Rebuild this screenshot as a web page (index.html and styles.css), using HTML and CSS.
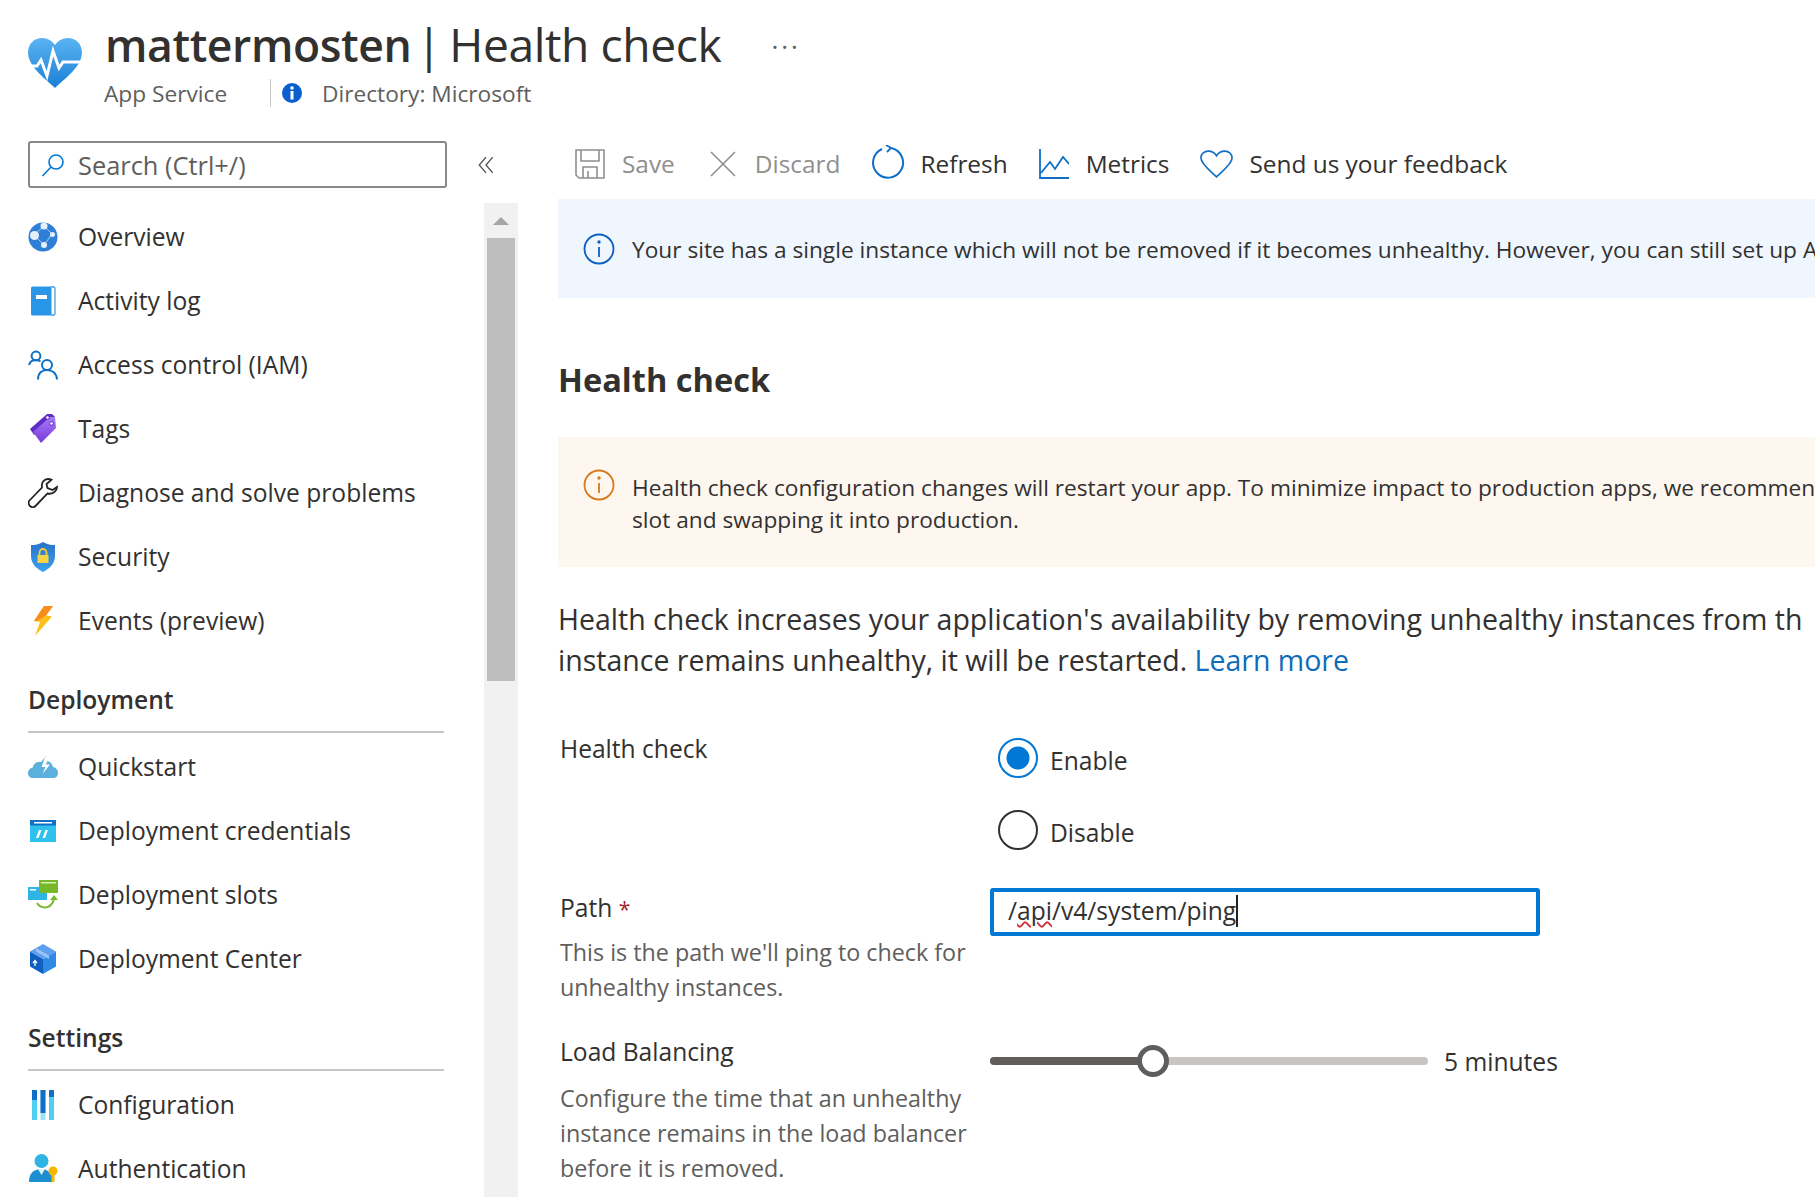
FILE: index.html
```html
<!DOCTYPE html>
<html lang="en">
<head>
    <meta charset="UTF-8">
    <title>mattermosten | Health check</title>
    <link rel="stylesheet" href="styles.css">
</head>
<body>
    <header class="page-head">
        <svg class="head-icon" viewBox="0 0 54 50">
            <defs>
                <linearGradient id="heartFill" x1="0" y1="0" x2="0" y2="1">
                    <stop offset="0" stop-color="#5ab4f2"/>
                    <stop offset="1" stop-color="#1a7fd6"/>
                </linearGradient>
            </defs>
            <path d="M27 50 C18 41 1 30 0 15 C0 5 7 0 14 0 C20 0 24 3 27 7 C30 3 34 0 40 0 C47 0 54 5 54 15 C53 30 36 41 27 50Z" fill="url(#heartFill)"/>
            <path d="M0 28 H9 L13 22 L19 38 L25 13 L31 30 L35 24 H54" fill="none" stroke="#fff" stroke-width="3"/>
        </svg>
        <div class="head-text">
            <h1 class="page-title"><b>mattermosten</b><span class="title-sep">|</span>Health check<span class="head-more">···</span></h1>
            <div class="page-sub">
                <span class="sub-type">App Service</span>
                <span class="sub-line"></span>
                <svg class="sub-info" viewBox="0 0 22 22">
                    <circle cx="11" cy="11" r="10" fill="#0b5ed0"/>
                    <rect x="9.5" y="9" width="3" height="8.5" fill="#fff"/>
                    <circle cx="11" cy="6" r="1.8" fill="#fff"/>
                </svg>
                <span>Directory: Microsoft</span>
            </div>
        </div>
    </header>

    <div class="page-body">
        <aside class="sidebar">
            <div class="search-row">
                <div class="search-box">
                    <svg class="search-icon" viewBox="0 0 24 24">
                        <circle cx="15" cy="9" r="7" fill="none" stroke="#0078d4" stroke-width="1.6"/>
                        <path d="M10 14 L1.5 23" stroke="#0078d4" stroke-width="1.6"/>
                    </svg>
                    <span>Search (Ctrl+/)</span>
                </div>
                <svg class="collapse-icon" viewBox="0 0 14 16">
                    <path d="M7 1 L1 8 L7 15 M13 1 L7 8 L13 15" fill="none" stroke="#555" stroke-width="1.2"/>
                </svg>
            </div>

            <div class="side-scroll">
                <nav class="nav">
                    <a class="nav-item">
                        <svg class="nav-icon" viewBox="0 0 30 30">
                            <circle cx="15" cy="15" r="14.5" fill="#2f7fd6"/>
                            <path d="M6 13 L16 4 L24 12 L16 23 Z" fill="none" stroke="#a8d0f5" stroke-width="1"/>
                            <circle cx="6.5" cy="13.5" r="4.5" fill="#e6f0fa"/>
                            <circle cx="16" cy="4" r="3.5" fill="#e6f0fa"/>
                            <circle cx="24.5" cy="12.5" r="2.5" fill="#e6f0fa"/>
                            <circle cx="16" cy="23" r="3" fill="#e6f0fa"/>
                        </svg>
                        <span>Overview</span>
                    </a>
                    <a class="nav-item">
                        <svg class="nav-icon" viewBox="0 0 30 30">
                            <rect x="3" y="0.5" width="24" height="29" rx="1.5" fill="#2a96e8"/>
                            <path d="M23.5 1 H26 A1 1 0 0 1 27 2 V28 A1 1 0 0 1 26 29 H23.5" fill="#fff" stroke="#1a7fd0" stroke-width="1"/>
                            <rect x="8" y="9" width="11" height="4" fill="#fff"/>
                        </svg>
                        <span>Activity log</span>
                    </a>
                    <a class="nav-item">
                        <svg class="nav-icon" viewBox="0 0 30 30" fill="none" stroke="#0f6fc6" stroke-width="2">
                            <circle cx="8" cy="6" r="4.4"/>
                            <path d="M1 15 C2 11 5 10 8 10 C10 10 11 10.5 12.5 11.5"/>
                            <circle cx="19" cy="15" r="5"/>
                            <path d="M10 29.5 C10 23 14 20 19 20 C24 20 28.5 23 29 29.5"/>
                        </svg>
                        <span>Access control (IAM)</span>
                    </a>
                    <a class="nav-item">
                        <svg class="nav-icon" viewBox="0 0 30 30">
                            <defs>
                                <linearGradient id="tagFill" x1="0" y1="0" x2="0" y2="1">
                                    <stop offset="0" stop-color="#a67af4"/>
                                    <stop offset="1" stop-color="#773adc"/>
                                </linearGradient>
                            </defs>
                            <path d="M2 15 L19 0 H24 L27 3 L6 21 Z" fill="#5e2bc4"/>
                            <path d="M5 18 L22 3 H27 L28 14 L13 29 Z" fill="url(#tagFill)"/>
                            <circle cx="19.500" cy="3.500" r="1.800" fill="#fff" stroke="#5e2bc4"/>
                            <circle cx="23.500" cy="9.500" r="1.800" fill="#fff" stroke="#5e2bc4"/>
                        </svg>
                        <span>Tags</span>
                    </a>
                    <a class="nav-item">
                        <svg class="nav-icon" viewBox="0 0 30 30">
                            <path d="M20 1 C16 1 13 5 14 9.500 L1.500 22.500 C0 24 0.500 26.500 2 28 C3.500 29.500 6 29.500 7.500 28 L19.500 15.500 C24 16.500 28.500 14 29 9 L24.500 12 L19.500 10 L18.500 6 L23.500 1.800 C22.500 1.300 21 1 20 1 Z" fill="none" stroke="#222" stroke-width="1.800"/>
                        </svg>
                        <span>Diagnose and solve problems</span>
                    </a>
                    <a class="nav-item">
                        <svg class="nav-icon" viewBox="0 0 30 30">
                            <defs>
                                <linearGradient id="shieldFill" x1="0" y1="0" x2="0" y2="1">
                                    <stop offset="0" stop-color="#2a72c8"/>
                                    <stop offset="1" stop-color="#3aa3ef"/>
                                </linearGradient>
                            </defs>
                            <path d="M15 0 C19 2.500 23 3 27 3 V14 C27 22 21 27 15 30 C9 27 3 22 3 14 V3 C7 3 11 2.500 15 0 Z" fill="url(#shieldFill)"/>
                            <path d="M11.500 13 V10.500 A3.500 3.500 0 0 1 18.500 10.500 V13" fill="none" stroke="#f3c93a" stroke-width="1.800"/>
                            <rect x="9.500" y="13" width="11" height="8" fill="#f6d247"/>
                        </svg>
                        <span>Security</span>
                    </a>
                    <a class="nav-item">
                        <svg class="nav-icon" viewBox="0 0 30 30">
                            <path d="M16 0 H25 L18 9.500 L24 10.500 L7 30 L12 16 L6 15 Z" fill="#fcc21b"/>
                            <path d="M16 0 H25 L18 9.500 L9 15 L6 15 Z" fill="#f78d1e"/>
                        </svg>
                        <span>Events (preview)</span>
                    </a>

                    <div class="nav-group">Deployment</div>

                    <a class="nav-item">
                        <svg class="nav-icon" viewBox="0 0 30 30">
                            <path d="M5 26 C2 26 0 24 0 21 C0 18 2 16 4.500 16 C5 12 9 9 13 10 L18 4 L18 9 C22 9 24.500 12 25 15 C28 15.500 30 18 30 21 C30 24 28 26 25 26 Z" fill="#5bb0dc"/>
                            <path d="M17 5 L13.500 15 H17.500 L14.500 22 L22 12.500 H18 L21 5 Z" fill="#fff"/>
                        </svg>
                        <span>Quickstart</span>
                    </a>
                    <a class="nav-item">
                        <svg class="nav-icon" viewBox="0 0 30 30">
                            <rect x="2" y="4" width="26" height="22" fill="#2fc0ee"/>
                            <rect x="2" y="4" width="26" height="5.500" fill="#0f6fc6"/>
                            <rect x="6" y="6" width="18" height="1.500" fill="#fff"/>
                            <path d="M11 14 H13.500 L10.500 22 H8 Z M17.500 14 H20 L17 22 H14.500 Z" fill="#fff"/>
                        </svg>
                        <span>Deployment credentials</span>
                    </a>
                    <a class="nav-item">
                        <svg class="nav-icon" viewBox="0 0 30 30">
                            <rect x="0" y="7" width="19" height="13" fill="#2fb4e4"/>
                            <rect x="2" y="9" width="6" height="1.500" fill="#fff"/>
                            <rect x="11" y="0" width="19" height="13" fill="#76b82a"/>
                            <rect x="13" y="2" width="15" height="1.500" fill="#d8efb8"/>
                            <path d="M9 23 C13 29 23 30 26 19" fill="none" stroke="#76b82a" stroke-width="2"/>
                            <path d="M22 20 L26 15 L30 20 Z" fill="#76b82a"/>
                        </svg>
                        <span>Deployment slots</span>
                    </a>
                    <a class="nav-item">
                        <svg class="nav-icon" viewBox="0 0 30 30">
                            <path d="M15 0 L28 7.500 L15 15 L2 7.500 Z" fill="#5ea0ef"/>
                            <path d="M2 7.500 L15 15 V30 L2 22.500 Z" fill="#0f5fc0"/>
                            <path d="M28 7.500 L15 15 V30 L28 22.500 Z" fill="#2f8ae6"/>
                            <path d="M8 4 L21 11.500 V15 L8 7.500 Z" fill="#9ac4f6"/>
                            <path d="M7 22 V17 M5 19 L7 16.500 L9 19" fill="none" stroke="#fff" stroke-width="1.300"/>
                        </svg>
                        <span>Deployment Center</span>
                    </a>

                    <div class="nav-group">Settings</div>

                    <a class="nav-item">
                        <svg class="nav-icon" viewBox="0 0 30 30">
                            <rect x="4" y="0" width="5" height="30" fill="#4fd0f2"/>
                            <rect x="4" y="0" width="5" height="10" fill="#0f6fc6"/>
                            <rect x="12.500" y="0" width="5" height="30" fill="#9be3f7"/>
                            <rect x="12.500" y="0" width="5" height="23" fill="#0f6fc6"/>
                            <rect x="21" y="0" width="5" height="30" fill="#4fd0f2"/>
                            <rect x="21" y="0" width="5" height="7" fill="#0f6fc6"/>
                        </svg>
                        <span>Configuration</span>
                    </a>
                    <a class="nav-item">
                        <svg class="nav-icon" viewBox="0 0 30 30">
                            <circle cx="13.500" cy="7" r="7" fill="#2fb4e4"/>
                            <path d="M1 28 C1 20 5 15 13.500 15 C19 15 22 18 24 22 V28 Z" fill="#1d8fd0"/>
                            <path d="M10 15 L13.500 21 L17 15 Z" fill="#dff3fb"/>
                            <circle cx="25" cy="17" r="4.500" fill="#f7b500"/>
                            <rect x="23.500" y="20" width="3" height="8" fill="#f7b500"/>
                        </svg>
                        <span>Authentication</span>
                    </a>
                </nav>
                <div class="scrollbar">
                    <div class="scroll-up"></div>
                    <div class="scroll-thumb"></div>
                </div>
            </div>
        </aside>

        <main class="content">
            <div class="toolbar">
                <span class="tool is-off">
                    <svg class="tool-icon" viewBox="0 0 30 30" fill="none" stroke="#8f8f8f" stroke-width="1.600">
                        <path d="M1 1 H29 V29 H4 L1 26 Z"/>
                        <path d="M6 1 V12 H24 V1"/>
                        <path d="M8 29 V18 H22 V29"/>
                        <path d="M13 22 V29"/>
                    </svg>
                    Save
                </span>
                <span class="tool tool-discard is-off">
                    <svg class="tool-icon" viewBox="0 0 30 30" fill="none" stroke="#8f8f8f" stroke-width="1.600">
                        <path d="M3 3 L27 27 M27 3 L3 27"/>
                    </svg>
                    Discard
                </span>
                <span class="tool">
                    <svg class="tool-icon tool-icon-big" viewBox="0 0 34 34" fill="none" stroke="#0f6fc6" stroke-width="2">
                        <path d="M11 4 A15 15 0 1 0 20 3"/>
                        <path d="M15 0 L20 3 L16 7" stroke-width="1.800"/>
                    </svg>
                    Refresh
                </span>
                <span class="tool">
                    <svg class="tool-icon" viewBox="0 0 30 30" fill="none" stroke="#0f6fc6" stroke-width="1.800">
                        <path d="M1 0 V29 H30"/>
                        <path d="M2 24 L11 13 L16 20 L24 8 L30 15"/>
                    </svg>
                    Metrics
                </span>
                <span class="tool">
                    <svg class="tool-icon tool-icon-wide" viewBox="0 0 36 30" fill="none" stroke="#0f6fc6" stroke-width="1.800">
                        <path d="M18 29 C12 23 1 15 1 8.500 C1 3.500 5 1 9 1 C13 1 16 3 18 6 C20 3 23 1 27 1 C31 1 35 3.500 35 8.500 C35 15 24 23 18 29 Z"/>
                    </svg>
                    Send us your feedback
                </span>
            </div>

            <div class="notice notice-info">
                <svg class="notice-icon" viewBox="0 0 32 32" fill="none" stroke="#0f5fc0" stroke-width="1.800">
                    <circle cx="16" cy="16" r="14.500"/>
                    <path d="M16 14 V24"/>
                    <circle cx="16" cy="9" r="0.800"/>
                </svg>
                <p>Your site has a single instance which will not be removed if it becomes unhealthy. However, you can still set up A</p>
            </div>

            <h2 class="section-title">Health check</h2>

            <div class="notice notice-warn">
                <svg class="notice-icon" viewBox="0 0 32 32" fill="none" stroke="#d67a1e" stroke-width="1.800">
                    <circle cx="16" cy="16" r="14.500"/>
                    <path d="M16 14 V24"/>
                    <circle cx="16" cy="9" r="0.800"/>
                </svg>
                <p>Health check configuration changes will restart your app. To minimize impact to production apps, we recommen<br>slot and swapping it into production.</p>
            </div>

            <p class="intro">Health check increases your application's availability by removing unhealthy instances from th<br>instance remains unhealthy, it will be restarted. <a class="link">Learn more</a></p>

            <div class="form">
                <div class="form-row">
                    <label class="field-label">Health check</label>
                    <div class="radios">
                        <div class="radio-item">
                            <span class="radio is-on"></span>
                            <span class="radio-text">Enable</span>
                        </div>
                        <div class="radio-item">
                            <span class="radio"></span>
                            <span class="radio-text">Disable</span>
                        </div>
                    </div>
                </div>

                <div class="form-row form-row-path">
                    <div>
                        <label class="field-label">Path <span class="req">*</span></label>
                        <p class="hint">This is the path we'll ping to check for unhealthy instances.</p>
                    </div>
                    <div class="text-input">
                        <span class="typed">/<span class="squiggle">api</span>/v4/system/ping</span>
                    </div>
                </div>

                <div class="form-row form-row-load">
                    <div>
                        <label class="field-label">Load Balancing</label>
                        <p class="hint">Configure the time that an unhealthy instance remains in the load balancer before it is removed.</p>
                    </div>
                    <div class="slider-row">
                        <div class="slider">
                            <div class="slider-fill"></div>
                            <div class="slider-thumb"></div>
                        </div>
                        <span>5 minutes</span>
                    </div>
                </div>
            </div>
        </main>
    </div>
</body>
</html>
```

FILE: styles.css
```css
* { margin: 0; padding: 0; box-sizing: border-box; }

html, body {
    width: 1815px;
    height: 1197px;
    overflow: hidden;
}

body {
    background: #fff;
    color: #323130;
    font-family: "Open Sans", "Noto Sans", sans-serif;
    font-size: 24.6px;
}

svg { display: block; flex: none; }

/* header */
.page-head {
    display: flex;
    height: 141px;
    padding: 15px 0 0 28px;
}

.head-icon {
    width: 54px;
    height: 50px;
    margin: 23px 23px 0 0;
}

.page-title {
    font-size: 46.2px;
    line-height: 60px;
    font-weight: 400;
    white-space: nowrap;
    letter-spacing: -0.4px;
}

.page-title b {
    font-size: 44.5px;
    font-weight: 600;
}

.title-sep { margin: 0 8px 0 5px; }

.head-more {
    font-size: 26px;
    letter-spacing: 3px;
    color: #605e5c;
    margin-left: 50px;
    position: relative;
    top: -6px;
}

.page-sub {
    display: flex;
    align-items: center;
    height: 30px;
    margin-top: -4px;
    margin-left: -1px;
    font-size: 22.7px;
    color: #605e5c;
}

.sub-type { width: 166px; }

.sub-line {
    width: 1px;
    height: 28px;
    background: #c8c6c4;
    margin-right: 10px;
}

.sub-info {
    width: 22px;
    height: 22px;
    margin-right: 19px;
}

/* page */
.page-body {
    display: flex;
}

.sidebar {
    width: 558px;
    padding-left: 28px;
    flex: none;
}

.search-row {
    display: flex;
    align-items: center;
    height: 47px;
}

.search-box {
    display: flex;
    align-items: center;
    width: 419px;
    height: 47px;
    padding-left: 11px;
    border: 2px solid #8a8886;
    border-radius: 3px;
    color: #605e5c;
    font-size: 25.4px;
}

.search-icon {
    width: 24px;
    height: 24px;
    margin-right: 13px;
}

.collapse-icon {
    width: 16px;
    height: 18px;
    margin-left: 31px;
}

.side-scroll {
    display: flex;
    margin-top: 15px;
}

.nav {
    width: 416px;
    padding-top: 2px;
}

.nav-item {
    display: flex;
    align-items: center;
    height: 64px;
    white-space: nowrap;
}

.nav-item span { margin-top: -2px; }

.nav-icon {
    width: 30px;
    height: 30px;
    margin-right: 20px;
}

.nav-group {
    display: flex;
    align-items: center;
    height: 80px;
    padding-top: 14px;
    margin-bottom: 2px;
    border-bottom: 2px solid #c8c6c4;
    font-weight: 600;
}

.scrollbar {
    width: 34px;
    height: 1000px;
    margin-left: 40px;
    padding: 0 3px;
    background: #f1f1f1;
}

.scroll-up {
    position: relative;
    height: 35px;
}

/* arrow in the scroll button */
.scroll-up::after {
    content: "";
    position: absolute;
    left: 6px;
    top: 14px;
    border-left: 8px solid transparent;
    border-right: 8px solid transparent;
    border-bottom: 8px solid #a6a6a6;
}

.scroll-thumb {
    height: 443px;
    background: #bdbdbd;
}

/* content */
.content {
    flex: 1;
    min-width: 0;
    overflow: hidden;
}

.toolbar {
    display: flex;
    align-items: center;
    height: 45px;
    padding-left: 17px;
    margin-bottom: 13px;
    white-space: nowrap;
    font-size: 24.4px;
}

.tool {
    display: flex;
    align-items: center;
    margin-right: 31px;
}

.tool-discard { margin-left: 2px; }

.is-off { color: #8f8f8f; }

.tool-icon {
    width: 30px;
    height: 30px;
    margin-right: 17px;
}

.tool-icon-big {
    width: 34px;
    height: 34px;
    margin-top: -3px;
    margin-right: 15px;
}

.tool-icon-wide {
    width: 33px;
    margin-right: 16px;
}

.notice {
    display: flex;
    font-size: 22.7px;
    line-height: 32px;
    padding-left: 25px;
    white-space: nowrap;
}

.notice p { margin-top: 3px; }

.notice-icon {
    width: 32px;
    height: 32px;
    margin-right: 17px;
}

.notice-info {
    align-items: center;
    height: 99px;
    background: #eff6fe;
}

.notice-warn {
    height: 130px;
    padding-top: 32px;
    background: #fef7f0;
}

.section-title {
    font-size: 32.6px;
    font-weight: 700;
    line-height: 44px;
    margin: 60px 0 35px;
}

.intro {
    font-size: 28.5px;
    line-height: 41px;
    margin-top: 32px;
    white-space: nowrap;
}

.link { color: #0f6cbd; }

.form {
    margin-top: 50px;
    padding-left: 2px;
}

.form-row {
    display: grid;
    grid-template-columns: 430px 550px;
}

.field-label {
    display: block;
    line-height: 35px;
}

.req {
    color: #a4262c;
    font-size: 21px;
}

.hint {
    color: #605e5c;
    font-size: 23.3px;
    line-height: 35px;
    margin-top: 8px;
    width: 415px;
}

.radios { margin-top: 7px; }

.radio-item {
    display: flex;
    align-items: center;
    height: 40px;
    margin-bottom: 32px;
    padding-left: 8px;
}

.radio-text { margin-top: 4px; }

.radio {
    width: 40px;
    height: 40px;
    margin-right: 12px;
    border: 2px solid #323130;
    border-radius: 50%;
}

.radio.is-on {
    border-color: #0078d4;
    background: radial-gradient(circle, #0078d4 0 11px, #fff 12px);
}

.form-row-path {
    margin-top: 8px;
}

.text-input {
    display: flex;
    align-items: center;
    height: 48px;
    padding-left: 14px;
    border: 4px solid #0078d4;
    border-radius: 3px;
    margin-top: -2px;
}

.typed {
    border-right: 2px solid #222;
    line-height: 32px;
    margin-top: -2px;
}

.squiggle {
    text-decoration: underline wavy #d13438 1.5px;
}

.form-row-load {
    margin-top: 29px;
}

.form-row-load .hint { margin-top: 12px; }

.slider-row {
    display: flex;
    align-items: center;
    width: 600px;
    height: 54px;
}

.slider {
    position: relative;
    width: 438px;
    height: 8px;
    margin-right: 16px;
    background: #c8c6c4;
    border-radius: 4px;
}

.slider-fill {
    width: 163px;
    height: 8px;
    background: #605e5c;
    border-radius: 4px;
}

.slider-thumb {
    position: absolute;
    left: 147px;
    top: -12px;
    width: 32px;
    height: 32px;
    background: #fff;
    border: 5px solid #605e5c;
    border-radius: 50%;
}
```
